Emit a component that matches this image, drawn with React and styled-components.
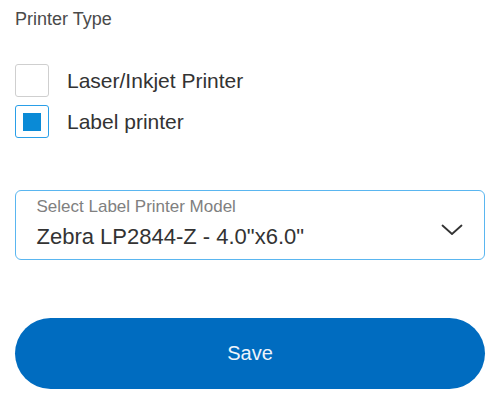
import { useState } from "react";
import styled, { createGlobalStyle } from "styled-components";

const Global = createGlobalStyle`
  body {
    margin: 0;
    background: #ffffff;
    font-family: "Liberation Sans", Arial, Helvetica, sans-serif;
  }
`;

export default function App() {
  const [type, setType] = useState("label");

  return (
    <>
      <Global />
      <Page>
        <Title>Printer Type</Title>
        <Options>
          <Option onClick={() => setType("laser")}>
            <Box $checked={type === "laser"}>{type === "laser" && <Mark />}</Box>
            <OptionText>Laser/Inkjet Printer</OptionText>
          </Option>
          <Option onClick={() => setType("label")}>
            <Box $checked={type === "label"}>{type === "label" && <Mark />}</Box>
            <OptionText>Label printer</OptionText>
          </Option>
        </Options>
        <Select>
          <SelectTexts>
            <SelectLabel>Select Label Printer Model</SelectLabel>
            <SelectValue>Zebra LP2844-Z - 4.0"x6.0"</SelectValue>
          </SelectTexts>
          <Chevron width="22" height="12" viewBox="0 0 22 12">
            <path d="M1.5 1.5 L11 10 L20.5 1.5" fill="none" stroke="#333" strokeWidth="1.8" strokeLinecap="round" strokeLinejoin="round" />
          </Chevron>
        </Select>
        <SaveButton>Save</SaveButton>
      </Page>
    </>
  );
}

const Page = styled.div`
  padding: 9px 18px 0 15px;
  display: flex;
  flex-direction: column;
`
const Title = styled.div`
  font-size: 18px;
  line-height: 20px;
  color: #4a4a4a;
`
const Options = styled.div`
  margin-top: 35px;
  display: flex;
  flex-direction: column;
  gap: 8px;
`
const Option = styled.div`
  display: flex;
  align-items: center;
  gap: 18px;
  cursor: pointer;
`
const Box = styled.div`
  width: 34px;
  height: 33px;
  box-sizing: border-box;
  border: 1.5px solid ${p => (p.$checked ? "#2a9fe8" : "#cfcfcf")};
  border-radius: 3px;
  display: flex;
  align-items: center;
  justify-content: center;
`
const Mark = styled.div`
  width: 18px;
  height: 18px;
  background: #0a8ad6;
`
const OptionText = styled.div`
  font-size: 21px;
  line-height: 33px;
  color: #333333;
`
const Select = styled.div`
  margin-top: 52px;
  height: 70px;
  box-sizing: border-box;
  border: 1.5px solid #5ab6f0;
  border-radius: 6px;
  padding: 6px 21px 0 20.5px;
  display: flex;
  align-items: flex-start;
  justify-content: space-between;
`
const SelectTexts = styled.div`
  display: flex;
  flex-direction: column;
  gap: 7px;
`
const SelectLabel = styled.div`
  font-size: 17px;
  line-height: 20px;
  color: #808080;
`
const SelectValue = styled.div`
  font-size: 22px;
  line-height: 26px;
  color: #333333;
`
const Chevron = styled.svg`
  margin-top: 27px;
`
const SaveButton = styled.button`
  margin-top: 58px;
  height: 71px;
  border: none;
  border-radius: 36px;
  background: #006cc0;
  color: #eef4fb;
  font-family: "Liberation Sans", Arial, Helvetica, sans-serif;
  font-size: 20px;
  cursor: pointer;
`
